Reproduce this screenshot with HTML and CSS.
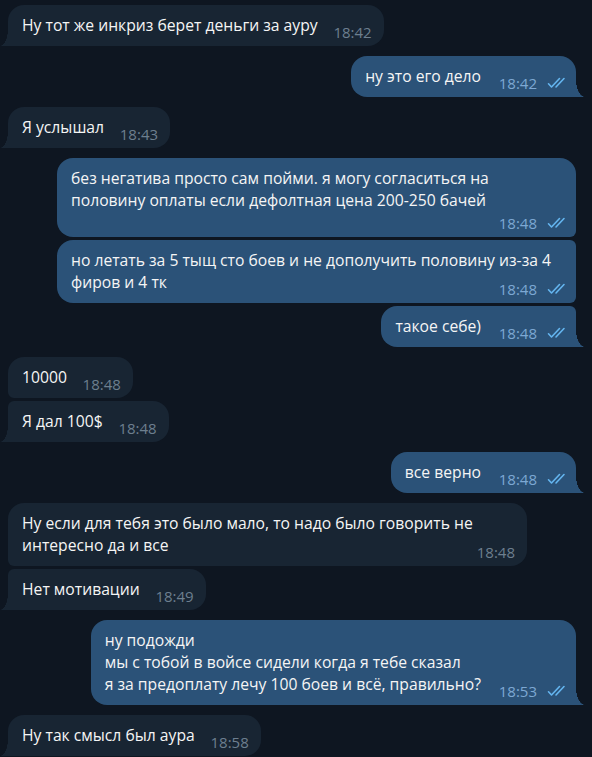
FILE: index.html
```
<!DOCTYPE html>
<html lang="ru">
<head>
<meta charset="utf-8">
<title>Chat</title>
<link rel="stylesheet" href="styles.css">
</head>
<body>
<div class="chat">
  <div class="group in">
    <div class="msg last"><span class="text">Ну тот же инкриз берет деньги за ауру</span><span class="spacer"></span><span class="meta"><span class="time">18:42</span></span></div>
  </div>
  <div class="group out">
    <div class="msg last"><span class="text">ну это его дело</span><span class="spacer"></span><span class="meta"><span class="time">18:42</span><svg class="check" viewBox="0 0 22 12"><path d="M1.5 6.8l3 3.2M4.5 10L12.5 1.5M9 10L17 1.5"/></svg></span></div>
  </div>
  <div class="group in">
    <div class="msg last"><span class="text">Я услышал</span><span class="spacer"></span><span class="meta"><span class="time">18:43</span></span></div>
  </div>
  <div class="group out">
    <div class="msg first"><span class="text">без негатива просто сам пойми. я могу согласиться на половину оплаты если дефолтная цена 200-250 бачей</span><span class="spacer"></span><span class="meta"><span class="time">18:48</span><svg class="check" viewBox="0 0 22 12"><path d="M1.5 6.8l3 3.2M4.5 10L12.5 1.5M9 10L17 1.5"/></svg></span></div>
    <div class="msg mid"><span class="text">но летать за 5 тыщ сто боев и не дополучить половину из-за 4 фиров и 4 тк</span><span class="spacer"></span><span class="meta"><span class="time">18:48</span><svg class="check" viewBox="0 0 22 12"><path d="M1.5 6.8l3 3.2M4.5 10L12.5 1.5M9 10L17 1.5"/></svg></span></div>
    <div class="msg last"><span class="text">такое себе)</span><span class="spacer"></span><span class="meta"><span class="time">18:48</span><svg class="check" viewBox="0 0 22 12"><path d="M1.5 6.8l3 3.2M4.5 10L12.5 1.5M9 10L17 1.5"/></svg></span></div>
  </div>
  <div class="group in">
    <div class="msg first"><span class="text">10000</span><span class="spacer"></span><span class="meta"><span class="time">18:48</span></span></div>
    <div class="msg last"><span class="text">Я дал 100$</span><span class="spacer"></span><span class="meta"><span class="time">18:48</span></span></div>
  </div>
  <div class="group out">
    <div class="msg last"><span class="text">все верно</span><span class="spacer"></span><span class="meta"><span class="time">18:48</span><svg class="check" viewBox="0 0 22 12"><path d="M1.5 6.8l3 3.2M4.5 10L12.5 1.5M9 10L17 1.5"/></svg></span></div>
  </div>
  <div class="group in">
    <div class="msg first"><span class="text">Ну если для тебя это было мало, то надо было говорить не интересно да и все</span><span class="spacer"></span><span class="meta"><span class="time">18:48</span></span></div>
    <div class="msg last"><span class="text">Нет мотивации</span><span class="spacer"></span><span class="meta"><span class="time">18:49</span></span></div>
  </div>
  <div class="group out">
    <div class="msg last"><span class="text">ну подожди<br>мы с тобой в войсе сидели когда я тебе сказал<br>я за предоплату лечу 100 боев и всё, правильно?</span><span class="spacer"></span><span class="meta"><span class="time">18:53</span><svg class="check" viewBox="0 0 22 12"><path d="M1.5 6.8l3 3.2M4.5 10L12.5 1.5M9 10L17 1.5"/></svg></span></div>
  </div>
  <div class="group in">
    <div class="msg last"><span class="text">Ну так смысл был аура</span><span class="spacer"></span><span class="meta"><span class="time">18:58</span></span></div>
  </div>
</div>
</body>
</html>
```
FILE: styles.css
```
html, body {
  margin: 0;
  padding: 0;
  background: #0e1621;
}
body {
  font-family: "Open Sans", "Noto Sans", sans-serif;
  color: #f5f5f5;
  overflow: hidden;
  height: 757px;
}
.chat {
  display: flex;
  flex-direction: column;
  gap: 10px;
  padding: 5px 16px 0 8px;
}
.group {
  display: flex;
  flex-direction: column;
  gap: 3px;
}
.group.in { align-items: flex-start; }
.group.out { align-items: flex-end; }

.msg {
  position: relative;
  display: flow-root;
  max-width: 519px;
  box-sizing: border-box;
  padding: 9px 14px 10px 14px;
  border-radius: 16px;
  font-size: 15.7px;
  line-height: 22px;
}
.in .msg { background: #182533; }
.out .msg { background: #2b5278; }

.in .msg.first, .in .msg.mid { border-bottom-left-radius: 6px; }
.in .msg.mid, .in .msg.last:not(:first-child) { border-top-left-radius: 6px; }
.in .msg.last { border-bottom-left-radius: 0; }

.out .msg.first, .out .msg.mid { border-bottom-right-radius: 6px; }
.out .msg.mid, .out .msg.last:not(:first-child) { border-top-right-radius: 6px; }
.out .msg.last { border-bottom-right-radius: 0; }

.msg.last::before {
  content: "";
  position: absolute;
  bottom: 0;
  width: 9px;
  height: 17px;
}
.in .msg.last::before {
  left: -8px;
  width: 8px;
  background: radial-gradient(ellipse 8px 17px at 0 0, transparent 98%, #182533 100%);
}
.out .msg.last::before {
  right: -9px;
  background: radial-gradient(ellipse 9px 17px at 100% 0, transparent 98%, #2b5278 100%);
}

.spacer {
  float: right;
  height: 16px;
}
.in .spacer { width: 52px; }
.out .spacer { width: 81px; }

.meta {
  position: absolute;
  bottom: 6px;
  display: flex;
  align-items: center;
  gap: 10px;
  height: 16px;
  line-height: 16px;
  font-size: 15px;
}
.in .meta { right: 12px; color: #6d7f8f; }
.out .meta { right: 7px; color: #7da8d3; }

.check {
  width: 22px;
  height: 12px;
  fill: none;
  stroke: #64b5ef;
  stroke-width: 1.6;
  stroke-linecap: round;
  stroke-linejoin: round;
}
```
